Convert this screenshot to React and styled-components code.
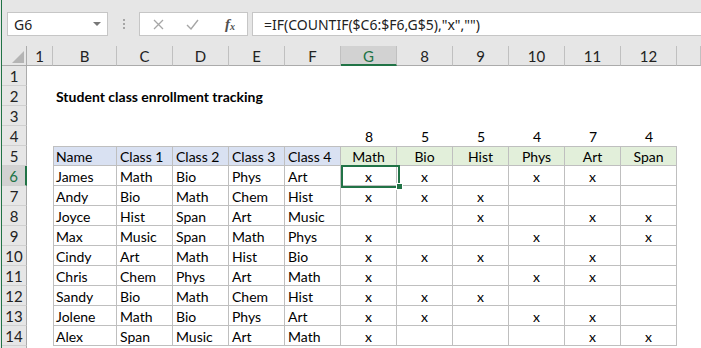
import React from 'react';
import styled, { createGlobalStyle } from 'styled-components';

const Global = createGlobalStyle`
  html, body { margin: 0; padding: 0; overflow: hidden; }
  body { background: #e6e6e6; width: 701px; height: 348px; }
`;

const Window = styled.div`
  margin-left: 1px;
  width: 699px;
  height: 348px;
  border-left: 1px solid #217346;
  background: #fff;
  overflow: hidden;
  position: relative;
  display: flex;
  flex-direction: column;
`;

const Toolbar = styled.div`
  height: 46px;
  flex: none;
  background: #e6e6e6;
  display: flex;
  align-items: flex-start;
  padding: 12px 0 0 5px;
  box-sizing: border-box;
`;

const NameBox = styled.div`
  width: 101px;
  height: 24px;
  box-sizing: border-box;
  background: #fff;
  border: 1px solid #c6c6c6;
  display: flex;
  align-items: center;
  justify-content: space-between;
  padding: 0 6px 0 6px;
  font-family: "Noto Sans", sans-serif;
  font-size: 14px;
  color: #222;
`;

const Dots = styled.div`
  width: 31px;
  height: 24px;
  display: flex;
  flex-direction: column;
  align-items: center;
  justify-content: center;
  gap: 2px;
  & span { width: 2px; height: 2px; background: #a6a6a6; display: block; }
`;

const IconBox = styled.div`
  width: 109px;
  height: 24px;
  box-sizing: border-box;
  background: #fff;
  border: 1px solid #c6c6c6;
  display: flex;
  align-items: center;
  padding-left: 13px;
  gap: 22px;
`;

const Fx = styled.span`
  font-family: "Liberation Serif", serif;
  font-style: italic;
  font-weight: bold;
  font-size: 15px;
  color: #505050;
  margin-left: 4px;
  & sub { font-size: 10px; vertical-align: -1px; }
`;

const FormulaBox = styled.div`
  flex: 1;
  margin-left: 4px;
  height: 24px;
  box-sizing: border-box;
  background: #fff;
  border: 1px solid #c6c6c6;
  border-right: none;
  display: flex;
  align-items: center;
  padding-left: 11px;
  font-family: "Noto Sans", sans-serif;
  font-size: 14px;
  color: #222;
  white-space: nowrap;
`;

const Sheet = styled.div`
  display: grid;
  grid-template-columns: 25px 26px 64px repeat(10, 56px) 1fr;
  grid-auto-rows: 20px;
  font-family: "Lato", sans-serif;
  font-size: 14px;
  color: #000;
`;

const Corner = styled.div`
  background: #e6e6e6;
  border-right: 1px solid #ababab;
  border-bottom: 1px solid #ababab;
  box-sizing: border-box;
  position: relative;
  & svg { position: absolute; right: 2px; bottom: 2px; }
`;

const ColHead = styled.div`
  background: ${p => (p.$active ? '#d2d2d2' : '#e6e6e6')};
  color: ${p => (p.$active ? '#217346' : '#222')};
  border-right: 1px solid #c0c0c0;
  border-bottom: ${p => (p.$active ? '2px solid #217346' : '1px solid #ababab')};
  box-sizing: border-box;
  display: flex;
  align-items: center;
  justify-content: center;
  font-size: 15px;
  padding-top: ${p => (p.$active ? '1px' : '0')};
`;

const RowHead = styled.div`
  background: ${p => (p.$active ? '#d2d2d2' : '#e6e6e6')};
  color: ${p => (p.$active ? '#217346' : '#222')};
  border-right: ${p => (p.$active ? '2px solid #217346' : '1px solid #ababab')};
  border-bottom: 1px solid #d0d0d0;
  box-sizing: border-box;
  display: flex;
  align-items: center;
  justify-content: center;
  font-size: 15px;
`;

const Cell = styled.div`
  box-sizing: border-box;
  position: relative;
  white-space: nowrap;
  overflow: visible;
  line-height: 19px;
  padding: 1px 3px 0 ${p => (p.$first ? '2px' : '3px')};
  text-align: ${p => p.$align || 'left'};
  font-weight: ${p => (p.$bold ? 700 : 400)};
  background: ${p => p.$fill || 'transparent'};
  border-right: ${p => (p.$table ? '1px solid #bfbfbf' : 'none')};
  border-bottom: ${p => (p.$table ? '1px solid #bfbfbf' : 'none')};
  border-left: ${p => (p.$first ? '1px solid #bfbfbf' : 'none')};
  border-top: ${p => (p.$top ? '1px solid #bfbfbf' : 'none')};
  padding-top: ${p => (p.$top ? '0' : '1px')};
`;

const Selection = styled.div`
  position: absolute;
  left: 339px;
  top: 165px;
  width: 59px;
  height: 23px;
  box-sizing: border-box;
  border: 2px solid #217346;
  pointer-events: none;
`;

const Handle = styled.div`
  position: absolute;
  left: 394px;
  top: 183px;
  width: 7px;
  height: 7px;
  box-sizing: border-box;
  background: #217346;
  border: 1px solid #fff;
`;

const colLetters = ['1', 'B', 'C', 'D', 'E', 'F', 'G', '8', '9', '10', '11', '12', ''];
const subjects = ['Math', 'Bio', 'Hist', 'Phys', 'Art', 'Span'];
const counts = [8, 5, 5, 4, 7, 4];
const students = [
  ['James', 'Math', 'Bio', 'Phys', 'Art', '110110'],
  ['Andy', 'Bio', 'Math', 'Chem', 'Hist', '111000'],
  ['Joyce', 'Hist', 'Span', 'Art', 'Music', '001011'],
  ['Max', 'Music', 'Span', 'Math', 'Phys', '100101'],
  ['Cindy', 'Art', 'Math', 'Hist', 'Bio', '111010'],
  ['Chris', 'Chem', 'Phys', 'Art', 'Math', '100110'],
  ['Sandy', 'Bio', 'Math', 'Chem', 'Hist', '111000'],
  ['Jolene', 'Math', 'Bio', 'Phys', 'Art', '110110'],
  ['Alex', 'Span', 'Music', 'Art', 'Math', '100011'],
];

function Row({ n, label, children }) {
  return (
    <>
      <RowHead $active={n === 6}>{label === undefined ? n : label}</RowHead>
      {children}
    </>
  );
}

function blanks(k, start = 0) {
  return Array.from({ length: k }, (_, i) => <Cell key={'b' + start + i} />);
}

export default function App() {
  return (
    <>
      <Global />
      <Window>
        <Toolbar>
          <NameBox>
            <span>G6</span>
            <svg width="8" height="5" viewBox="0 0 8 5"><polygon points="0,0 8,0 4,4" fill="#777" /></svg>
          </NameBox>
          <Dots><span /><span /><span /></Dots>
          <IconBox>
            <svg width="11" height="11" viewBox="0 0 11 11">
              <path d="M1 1 L10 10 M10 1 L1 10" stroke="#a6a6a6" strokeWidth="1.3" fill="none" />
            </svg>
            <svg width="13" height="11" viewBox="0 0 13 11">
              <path d="M1 6 L5 10 L12 1" stroke="#a6a6a6" strokeWidth="1.4" fill="none" />
            </svg>
            <Fx>f<sub>x</sub></Fx>
          </IconBox>
          <FormulaBox>=IF(COUNTIF($C6:$F6,G$5),"x","")</FormulaBox>
        </Toolbar>
        <Sheet>
          <Corner>
            <svg width="12" height="12" viewBox="0 0 12 12"><polygon points="12,0 12,12 0,12" fill="#b4b4b4" /></svg>
          </Corner>
          {colLetters.map((c, i) => (
            <ColHead key={i} $active={c === 'G'}>{c}</ColHead>
          ))}
          <Row n={1}>{blanks(13)}</Row>
          <Row n={2}>
            <Cell />
            <Cell $bold>Student class enrollment tracking</Cell>
            {blanks(11)}
          </Row>
          <Row n={3}>{blanks(13)}</Row>
          <Row n={4}>
            {blanks(6)}
            {counts.map((c, i) => (
              <Cell key={i} $align="center">{c}</Cell>
            ))}
            <Cell />
          </Row>
          <Row n={5}>
            <Cell />
            {['Name', 'Class 1', 'Class 2', 'Class 3', 'Class 4'].map((h, i) => (
              <Cell key={h} $table $top $first={i === 0} $fill="#d9e1f2">{h}</Cell>
            ))}
            {subjects.map(s => (
              <Cell key={s} $table $top $fill="#e2efda" $align="center">{s}</Cell>
            ))}
            <Cell />
          </Row>
          {students.map((r, idx) => (
            <Row n={6 + idx} key={r[0]}>
              <Cell />
              {r.slice(0, 5).map((v, i) => (
                <Cell key={i} $table $first={i === 0}>{v}</Cell>
              ))}
              {r[5].split('').map((f, i) => (
                <Cell key={'x' + i} $table $align="center">{f === '1' ? 'x' : ''}</Cell>
              ))}
              <Cell />
            </Row>
          ))}
          <Row n={15} label="">{blanks(13)}</Row>
        </Sheet>
        <Selection />
        <Handle />
      </Window>
    </>
  );
}
